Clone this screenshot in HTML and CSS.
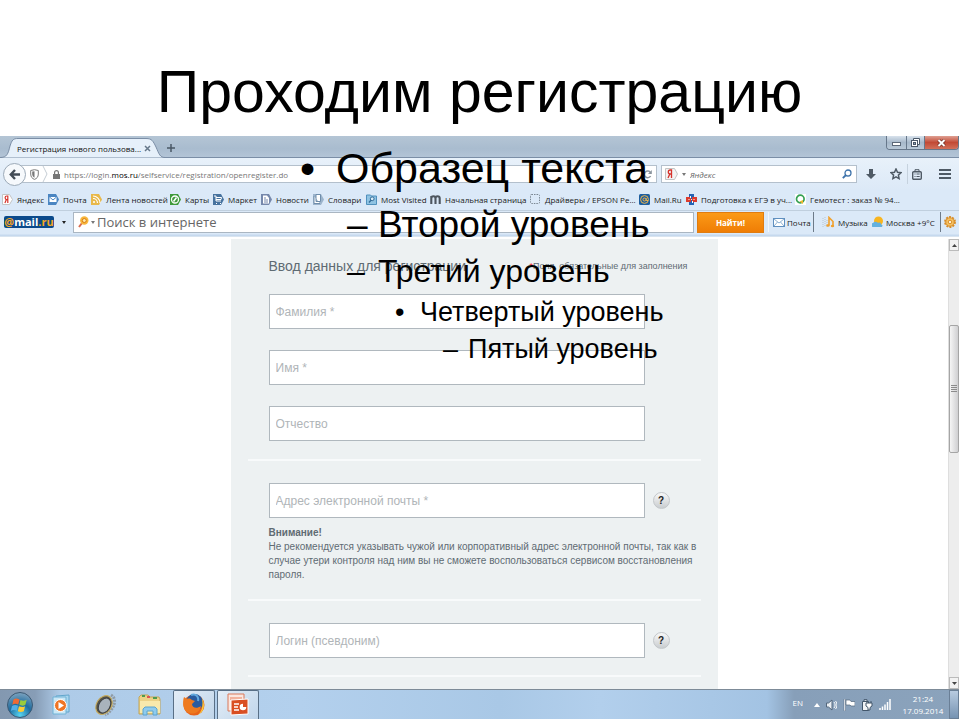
FILE: index.html
```
<!DOCTYPE html>
<html lang="ru">
<head>
<meta charset="utf-8">
<meta name="viewport" content="width=device-width, initial-scale=1">
<title>Проходим регистрацию</title>
<link rel="stylesheet" href="styles.css">
</head>
<body>
<main class="slide">
  <h1 class="title">Проходим регистрацию</h1>

  <section class="browser">
    <header class="tabstrip">
      <div class="tab">
        <svg class="tab-shape" viewBox="0 0 165 22" preserveAspectRatio="none" aria-hidden="true"><path d="M0 21.500C7 21.500 8 18 10 10C12 4 13 2.500 18 2.500H146C152 2.500 153 5 156 11C159 18 160 21.500 165 21.500" fill="#e6f0fa" stroke="#7b8ea6"/></svg>
        <span class="tab-name">Регистрация нового пользова...</span>
        <button class="plain tab-close" aria-label="Закрыть вкладку"><svg width="7" height="7" viewBox="0 0 7 7"><path d="M1 1l5 5M6 1l-5 5" stroke="#66788a" stroke-width="1.500"/></svg></button>
      </div>
      <button class="plain new-tab" aria-label="Новая вкладка"><svg width="8" height="8" viewBox="0 0 8 8"><path d="M4 0v8M0 4h8" stroke="#4a5866" stroke-width="1.500"/></svg></button>
      <div class="window-buttons">
        <button class="win" aria-label="Свернуть"><svg width="9" height="9" viewBox="0 0 9 9"><rect x=".5" y="4.500" width="8" height="3" fill="#fff" stroke="#5b6878"/></svg></button>
        <button class="win win-mid" aria-label="Развернуть"><svg width="9" height="9" viewBox="0 0 9 9"><path d="M2.500 2V.500h6v6H7" fill="#fff" stroke="#4b5868"/><rect x=".5" y="2.500" width="6" height="6" fill="#fff" stroke="#4b5868"/><rect x="2.500" y="4.500" width="2" height="2" fill="#8da0b5" stroke="#4b5868"/></svg></button>
        <button class="win win-close" aria-label="Закрыть"><svg width="9" height="8" viewBox="0 0 9 8"><path d="M1.500 1l6 6M7.500 1l-6 6" stroke="#6b2a22" stroke-width="3.400"/><path d="M1.500 1l6 6M7.500 1l-6 6" stroke="#fff" stroke-width="2"/></svg></button>
      </div>
    </header>

    <nav class="navbar">
      <button class="plain back" aria-label="Назад"><svg width="11" height="11" viewBox="0 0 11 11"><path d="M6 1L1.800 5.500 6 10M2 5.500h9" fill="none" stroke="#414b55" stroke-width="2.400"/></svg></button>
      <div class="urlbar">
        <svg width="9" height="11" viewBox="0 0 9 11" aria-hidden="true"><path d="M4.500.7L8.300 1.500V5c0 3-1.500 4.500-3.800 5.400C2.200 9.500.7 8 .7 5V1.500z" fill="#fff" stroke="#7b7b7b"/><path d="M4.500 2.200v6.600C3 8 2.200 6.800 2.200 5V2.600z" fill="#777"/></svg>
        <svg class="chevron" width="6" height="16" viewBox="0 0 6 16" aria-hidden="true"><path d="M1 0l4 8-4 8" fill="none" stroke="#c5cdd4"/></svg>
        <svg class="lock" width="7" height="9" viewBox="0 0 7 9" aria-hidden="true"><path d="M1.600 4V2.500a1.900 1.900 0 013.800 0V4" fill="none" stroke="#777" stroke-width="1.200"/><rect y="4" width="7" height="5" fill="#777"/></svg>
        <label class="url" for="url">https://login.<b>mos.ru</b>/selfservice/registration/openregister.do</label>
        <input id="url" class="url-input" type="text">
        <button class="plain reload" aria-label="Обновить"><svg width="9" height="9" viewBox="0 0 9 9"><path d="M7.500 2.600A3.300 3.300 0 107.600 6" fill="none" stroke="#8a949d" stroke-width="1.500"/><path d="M8.800 0v4H5z" fill="#8a949d"/></svg></button>
      </div>
      <div class="search">
        <svg width="13" height="12" viewBox="0 0 13 12" aria-hidden="true"><path d="M.5.500h9l3 5.500-3 5.500h-9z" fill="#f3f3f3" stroke="#c4c4c4"/><path d="M6.500 10V2H5.300a2 2 0 000 4h1M4.800 6L3 10" fill="none" stroke="#d6332c" stroke-width="1.300"/></svg>
        <i class="caret"></i>
        <input type="text" class="search-input" aria-label="Поиск" placeholder="Яндекс">
        <button class="plain" aria-label="Найти"><svg width="10" height="10" viewBox="0 0 10 10"><circle cx="6" cy="4" r="3" fill="none" stroke="#3e73ab" stroke-width="1.300"/><path d="M4 6L.8 9.200" stroke="#3e73ab" stroke-width="1.800"/></svg></button>
      </div>
      <div class="tools">
        <button class="plain" aria-label="Загрузки"><svg width="10" height="11" viewBox="0 0 10 11"><path d="M3 0h4v5h3L5 10 0 5h3z" fill="#4f5a65"/></svg></button>
        <button class="plain" aria-label="В закладки"><svg width="12" height="12" viewBox="0 0 12 12"><path d="M6 1l1.500 3.300 3.500.4-2.600 2.400.7 3.500L6 8.900l-3.100 1.700.7-3.500L1 4.700l3.500-.4z" fill="none" stroke="#4f5a65" stroke-width="1.500"/></svg></button>
        <button class="plain tool-list" aria-label="Закладки"><svg width="10" height="11" viewBox="0 0 10 11"><rect x=".7" y="2.700" width="8.600" height="7.600" rx="1" fill="none" stroke="#4f5a65" stroke-width="1.400"/><path d="M3 2.500V.7h4v1.800M2.500 5h1M4.500 5h3.200M2.500 7.500h1M4.500 7.500h3.200" fill="none" stroke="#4f5a65"/></svg></button>
        <button class="plain tool-menu" aria-label="Меню"><svg width="12" height="10" viewBox="0 0 12 10"><path d="M0 1h12M0 5h12M0 9h12" stroke="#4f5a65" stroke-width="2"/></svg></button>
      </div>
    </nav>

    <div class="bookmarks">
      <a href="#"><svg viewBox="0 0 11 11"><path d="M.5.500h7l3 5-3 5h-7z" fill="#fff" stroke="#c4c4c4"/><path d="M5.800 9V2H4.900a1.700 1.700 0 000 3.600h.8M4.400 5.600L2.900 9" fill="none" stroke="#d6332c" stroke-width="1.200"/></svg>Яндекс</a>
      <a href="#"><svg viewBox="0 0 11 11"><path d="M0 0h8l3 5.500L8 11H0z" fill="#4b86c2"/><rect x="1.500" y="3" width="7" height="5" fill="#fff"/><path d="M1.500 3L5 6l3.500-3" fill="none" stroke="#4b86c2"/></svg>Почта</a>
      <a href="#"><svg viewBox="0 0 11 11"><path d="M0 0h8l3 5.500L8 11H0z" fill="#e8b84a"/><path d="M2 4.500A4.500 4.500 0 016.500 9M2 2a7 7 0 017 7" fill="none" stroke="#fff" stroke-width="1.200"/><circle cx="3" cy="8" r="1" fill="#fff"/></svg>Лента новостей</a>
      <a href="#"><svg viewBox="0 0 11 11"><path d="M0 0h8l3 5.500L8 11H0z" fill="#3f9a3c"/><circle cx="5" cy="5.500" r="3.500" fill="none" stroke="#fff" stroke-width="1.300"/><path d="M3.500 7.500L6.500 3.500" stroke="#fff" stroke-width="1.500"/></svg>Карты</a>
      <a href="#"><svg viewBox="0 0 11 11"><path d="M0 0h8l3 5.500L8 11H0z" fill="#47739f"/><path d="M1 2h2v5h5M3 3.500h5.500L8 5.500H3" fill="none" stroke="#fff"/><path d="M3 9.500h1M7 9.500h1" stroke="#fff"/></svg>Маркет</a>
      <a href="#"><svg viewBox="0 0 11 11"><path d="M0 0h8l3 5.500L8 11H0z" fill="#7688ac"/><path d="M2 1.500h4L8 4v5.500H2z" fill="#fff"/><path d="M3 4h2M3 6h4M3 8h4" stroke="#7688ac"/></svg>Новости</a>
      <a href="#"><svg viewBox="0 0 11 11"><path d="M0 0h8l3 5.500L8 11H0z" fill="#9cb4cc"/><path d="M3 .500h4.500v7H3zM1 2v7.500h6" fill="#fff" stroke="#6e8dab"/></svg>Словари</a>
      <a href="#"><svg viewBox="0 0 11 11"><path d="M.5 1h4l1 1h5v8.500H.5z" fill="#8fc3e3" stroke="#4f90bd"/><circle cx="6.200" cy="4.800" r="1.900" fill="#d8edf8" stroke="#336b97"/><path d="M5 6.300L3 8.500" stroke="#336b97" stroke-width="1.300"/></svg>Most Visited</a>
      <a href="#"><svg viewBox="0 0 11 11"><path d="M1.300 10V2M1.300 4.500C1.300 1.500 5.500 1.500 5.500 4.500V10M5.500 4.500C5.500 1.500 9.700 1.500 9.700 4.500V10" fill="none" stroke="#4e565f" stroke-width="2.100"/></svg>Начальная страница</a>
      <a href="#"><svg viewBox="0 0 11 11"><rect x=".5" y=".5" width="9" height="9" rx="1" fill="none" stroke="#7b8792" stroke-dasharray="1.500 1"/></svg>Драйверы / EPSON Pe...</a>
      <a href="#"><svg viewBox="0 0 11 11"><rect width="11" height="11" rx="1.500" fill="#1d5e9f"/><circle cx="5.500" cy="5.500" r="3.900" fill="none" stroke="#efb54b"/><circle cx="5.500" cy="5.500" r="1.500" fill="none" stroke="#efb54b"/><path d="M7.200 4v2.500h2" fill="none" stroke="#efb54b"/></svg>Mail.Ru</a>
      <a href="#"><svg viewBox="0 0 11 11"><path d="M3 0h5v5H3zM3 6h5v5H3z" fill="#2463b4"/><path d="M0 3h5v5H0zM6 3h5v5H6z" fill="#dc3b2e"/><path d="M4.500 2v2M6.500 7v2M2.500 5.500h1M7.500 5.500h1" stroke="#fff"/></svg>Подготовка к ЕГЭ в уч...</a>
      <a href="#"><svg viewBox="0 0 11 11"><rect width="11" height="11" fill="#fff"/><circle cx="5.300" cy="5" r="3.800" fill="none" stroke="#36a153" stroke-width="1.700"/><path d="M4.500 7.500L8 6v4z" fill="#efb630"/></svg>Гемотест : заказ № 94...</a>
    </div>

    <div class="mailbar">
      <a href="#" class="mail-logo"><span>@</span>mail<span>.ru</span></a>
      <i class="caret caret-dark"></i>
      <div class="mail-search">
        <svg width="11" height="12" viewBox="0 0 11 12" aria-hidden="true"><path d="M4 7L1 11" stroke="#d86a4e" stroke-width="2"/><circle cx="6.300" cy="4.500" r="4.200" fill="#f8b63a"/><circle cx="6.300" cy="4.500" r="2" fill="#fce9a8" stroke="#d97a12"/></svg>
        <i class="caret"></i>
        <input type="text" class="mail-input" aria-label="Поиск в интернете" placeholder="Поиск в интернете">
      </div>
      <button class="find">Найти!</button>
      <a href="#" class="widget w-mail"><svg width="12" height="9" viewBox="0 0 12 9"><rect x=".5" y=".5" width="11" height="8" fill="#fff" stroke="#5f8fbf"/><path d="M1 1l5 4 5-4M1 8l3.500-4M11 8L7.500 4" fill="none" stroke="#8db1d3"/></svg>Почта</a>
      <a href="#" class="widget w-music"><svg width="14" height="12" viewBox="0 0 14 12"><path d="M1 2v9M3 1v10M5 4v7" stroke="#b9c5cf" stroke-dasharray="1 1"/><path d="M7 9V1.500l4 4V10" fill="none" stroke="#f0a02c" stroke-width="1.600"/><ellipse cx="6" cy="9.500" rx="1.700" ry="1.300" fill="#f0a02c"/><ellipse cx="10.500" cy="10" rx="1.700" ry="1.300" fill="#f0a02c"/></svg>Музыка</a>
      <a href="#" class="widget w-weather"><svg width="12" height="12" viewBox="0 0 12 12"><circle cx="6.500" cy="5" r="4.500" fill="#f8b51f"/><path d="M1 11a2 2 0 010-4 3 3 0 015 0c2-1 3 0 3 1.500 2 0 2 2.500 0 2.500z" fill="#63b1df"/></svg>Москва +9°C</a>
      <button class="plain gear" aria-label="Настройки"><svg width="12" height="12" viewBox="0 0 12 12"><circle cx="6" cy="6" r="5" fill="none" stroke="#d88b25" stroke-width="1.800" stroke-dasharray="2 1.140"/><circle cx="6" cy="6" r="4.200" fill="#f7c566" stroke="#d88b25"/><circle cx="6" cy="6" r="1.800" fill="#fdf0d2" stroke="#d88b25"/></svg></button>
    </div>

    <div class="viewport">
      <form class="panel">
        <div class="form-head">
          <h2>Ввод данных для регистрации</h2>
          <p><span class="star">*</span>Поля, обязательные для заполнения</p>
        </div>
        <div class="group">
          <input class="field" type="text" aria-label="Фамилия" placeholder="Фамилия *">
          <input class="field" type="text" aria-label="Имя" placeholder="Имя *">
          <input class="field" type="text" aria-label="Отчество" placeholder="Отчество">
        </div>
        <div class="group">
          <div class="with-help">
            <input class="field" type="email" aria-label="Адрес электронной почты" placeholder="Адрес электронной почты *">
            <button type="button" class="help">?</button>
          </div>
          <p class="note"><b>Внимание!</b><br>Не рекомендуется указывать чужой или корпоративный адрес электронной почты, так как в случае утери контроля над ним вы не сможете воспользоваться сервисом восстановления пароля.</p>
        </div>
        <div class="group">
          <div class="with-help">
            <input class="field" type="text" aria-label="Логин" placeholder="Логин (псевдоним)">
            <button type="button" class="help">?</button>
          </div>
        </div>
      </form>
      <div class="scrollbar" aria-hidden="true">
        <span class="arrow"><svg width="5" height="3" viewBox="0 0 5 3"><path d="M0 3L2.500 0 5 3z" fill="#444"/></svg></span>
        <span class="before-thumb"></span>
        <span class="thumb"><svg width="6" height="7" viewBox="0 0 6 7"><path d="M0 .500h6M0 2.500h6M0 4.500h6M0 6.500h6" stroke="#8b8b8b"/></svg></span>
        <span class="after-thumb"></span>
        <span class="arrow"><svg width="5" height="3" viewBox="0 0 5 3"><path d="M0 0L2.500 3 5 0z" fill="#444"/></svg></span>
      </div>
    </div>
  </section>

  <footer class="taskbar">
    <button class="task start" aria-label="Пуск"><svg width="28" height="28" viewBox="0 0 28 28"><defs><radialGradient id="orb" cx=".5" cy=".9" r=".9"><stop offset="0" stop-color="#57d5f2"/><stop offset=".5" stop-color="#1e6c9f"/><stop offset="1" stop-color="#7fa4bf"/></radialGradient></defs><circle cx="14" cy="14" r="12.500" fill="url(#orb)" stroke="#3b5873"/><path d="M7.500 8.500c2-1.500 3.800-1.300 6 0l-1.200 5c-2.200-1-4-1-6 .2z" fill="#ee6a34"/><path d="M14.500 9c2 1 4 1 6.200-.2l-1.300 5c-2 1.200-4 1-6.100 0z" fill="#9acb3c"/><path d="M6 15c2-1.300 4-1.200 6-.2l-1.200 5c-2-1-4-1-6 .2z" fill="#52aee6"/><path d="M13 15.200c2 1 4 1.200 6.100 0l-1.300 5c-2 1.100-4 1-6 0z" fill="#fbcb36"/></svg></button>
    <button class="task" aria-label="Проигрыватель"><svg width="20" height="22" viewBox="0 0 20 22"><path d="M4 2l13-1v17H4z" fill="#a8d6ef" stroke="#62a6cc"/><path d="M1 3h13v17H1z" fill="#c9e7f6" stroke="#70b2d5"/><circle cx="8.500" cy="11.500" r="6" fill="#ee7524" stroke="#fff"/><path d="M6.500 8l5.500 3.500L6.500 15z" fill="#fff"/></svg></button>
    <button class="task" aria-label="Звук"><svg width="24" height="24" viewBox="0 0 24 24"><path d="M17 2c7 4 3 15-6 20" fill="none" stroke="#8f9ba6" stroke-width="3" stroke-dasharray="2 1"/><ellipse cx="10" cy="12" rx="7.500" ry="10" transform="rotate(32 10 12)" fill="#55534a" stroke="#c7ad60" stroke-width="1.200"/><ellipse cx="10.500" cy="12.500" rx="5.500" ry="8" transform="rotate(32 10.500 12.500)" fill="#a9b3bc" stroke="#3d4043"/></svg></button>
    <button class="task" aria-label="Проводник"><svg width="24" height="24" viewBox="0 0 24 24"><path d="M1 4l2-2h7l2 2h9l1 2v15H1z" fill="#ecd287" stroke="#c2a557"/><path d="M4 3h3M15 5h4" stroke="#4e9b50" stroke-width="2"/><path d="M9 4h3" stroke="#d55" stroke-width="2"/><path d="M2 8h20v12H2z" fill="#f8e9ac"/><path d="M5 22v-6l2-2h10l2 2v6h-4v-4H9v4z" fill="#8fcbed" stroke="#5ba4d0"/></svg></button>
    <button class="task open" aria-label="Firefox"><svg width="24" height="24" viewBox="0 0 24 24"><circle cx="12" cy="12" r="10.500" fill="#e8641b"/><circle cx="12.500" cy="9.500" r="8.500" fill="#2a5b9f"/><path d="M9 2c5-2 8 2 7 6" fill="none" stroke="#62a9de" stroke-width="2"/><path d="M20 5c3 6 3 13-4 17 5-5 5-10 4-17z" fill="#fbcf3c"/><path d="M2 4l3 2c2-1 4 0 5 1l3 1-3 3c0 4 5 5 9 2-1 6-7 9-12 7C1 18 0 10 2 4z" fill="#ee7a20"/></svg></button>
    <button class="task open" aria-label="PowerPoint"><svg width="24" height="24" viewBox="0 0 24 24"><path d="M2 1h16v17H2z" fill="#fbe6df" stroke="#d9795b"/><path d="M4 4h12v3H4z" fill="#f2b29d"/><path d="M5 7l17-1v15l-17 1z" fill="#d94f23" stroke="#fff"/><path d="M8 11h5M8 14h4M8 17h5" stroke="#fff" stroke-width="1.600"/><circle cx="17" cy="14" r="3.300" fill="#fff"/><path d="M17 14V10h4v4z" fill="#d94f23"/></svg></button>
    <div class="tray">
      <span class="lang">EN</span>
      <svg width="6" height="4" viewBox="0 0 6 4"><path d="M0 4l3-4 3 4z" fill="#fff"/></svg>
      <svg width="11" height="12" viewBox="0 0 11 12"><path d="M.5 4v4h2L6 11V1L2.500 4z" fill="#e9eef3" stroke="#53677c"/><path d="M8 3c1.500 2 1.500 4 0 6M9.500 2c2 2.500 2 5.500 0 8" fill="none" stroke="#fff"/></svg>
      <svg width="12" height="12" viewBox="0 0 12 12"><path d="M1 0h1.500v12H1z" fill="#fff" stroke="#53677c" stroke-width=".5"/><path d="M3 1h4l1 1.500h4V7H8L7 6H3z" fill="#fff" stroke="#53677c" stroke-width=".7"/></svg>
      <svg width="12" height="12" viewBox="0 0 12 12"><path d="M1.500 2.500h6v9h-6zM3 2.500V.7h3v1.800" fill="#f0f3f6" stroke="#42566b"/><path d="M6 2v2M10 2v2M5 4h6v3L9 8.500V11H7V8.500L5 7z" fill="#fff" stroke="#42566b"/></svg>
      <svg width="12" height="11" viewBox="0 0 12 11"><path d="M1 11V9M3.500 11V7.500M6 11V5.500M8.500 11V3M11 11V0" stroke="#fff" stroke-width="1.500"/></svg>
      <time class="clock">21:24<br>17.09.2014</time>
    </div>
    <button class="desktop" aria-label="Показать рабочий стол"></button>
  </footer>

  <div class="outline">
    <p class="l1"><span class="bullet">•</span>Образец текста</p>
    <p class="l2"><span class="bullet">–</span>Второй уровень</p>
    <p class="l3"><span class="bullet">–</span>Третий уровень</p>
    <p class="l4"><span class="bullet">•</span>Четвертый уровень</p>
    <p class="l5"><span class="bullet">–</span>Пятый уровень</p>
  </div>
</main>
</body>
</html>
```
FILE: styles.css
```
* { box-sizing: border-box; }
body { margin: 0; background: #fff; font-family: "Liberation Sans", Arial, sans-serif; color: #000; }
h1, h2, p { margin: 0; font-weight: 400; }
a { color: inherit; text-decoration: none; }
svg { display: block; flex: none; }
input, button { font-family: inherit; }
input { min-width: 0; border: 0; padding: 0; background: none; outline: 0; }
.plain { display: flex; align-items: center; justify-content: center; padding: 0; border: 0; background: none; }

.slide { position: relative; display: flex; flex-direction: column; min-height: 100vh; padding: 0 1px 1px 0; }
.title { height: 136px; padding-top: 58px; font-size: 59px; line-height: 68px; text-align: center; }

.browser { flex: 1; display: flex; flex-direction: column; font-family: "Open Sans", "Noto Sans", sans-serif; font-size: 8px; color: #1a1a1a; }
.caret { flex: none; border: 2px solid transparent; border-top: 3px solid #777; border-bottom: 0; }
.caret-dark { border-top-color: #222; }

.tabstrip { display: flex; height: 22px; background: linear-gradient(#b4c5d5, #a9bccf 60%, #b3c4d6); border-bottom: 1px solid #7b8ea6; }
.tab { position: relative; display: flex; align-items: center; justify-content: space-between; width: 165px; height: 22px; padding: 3px 14px 0 17px; }
.tab-shape { position: absolute; inset: 0; width: 100%; height: 100%; }
.tab-name, .tab-close { position: relative; }
.tab-name { color: #111; white-space: nowrap; }
.new-tab { width: 12px; padding-top: 2px; }
.window-buttons { display: flex; width: 73px; height: 14px; margin-left: auto; border: 1px solid #66778a; border-top: 0; border-radius: 0 0 4px 4px; overflow: hidden; }
.win { display: flex; align-items: center; justify-content: center; width: 19px; padding: 0; border: 0; background: linear-gradient(#d8e2ec, #a6b8ca 50%, #b9c9d8); }
.win-mid { border-left: 1px solid #66778a; border-right: 1px solid #66778a; }
.win-close { flex: 1; background: linear-gradient(#dfa093, #c24a35 50%, #d2705a); }

.navbar { display: flex; align-items: center; height: 32px; padding: 0 8px 0 3px; background: linear-gradient(#e8f1fa, #dce9f7); }
.back { z-index: 1; width: 23px; height: 23px; border: 1px solid #9caab8; border-radius: 50%; background: #f6f9fc; }
.urlbar { position: relative; flex: 1; display: flex; align-items: center; height: 18px; margin-left: -6px; padding: 0 4px 0 9px; border: 1px solid #b4c0cc; background: #fff; }
.chevron { margin-left: 3px; }
.lock { margin: 0 4px 0 5px; }
.url { color: #777; white-space: nowrap; }
.url b { color: #000; font-weight: 400; }
.url-input { flex: 1; height: 16px; }
.search { display: flex; align-items: center; gap: 4px; width: 196px; height: 18px; margin-left: 4px; padding: 0 4px 0 3px; border: 1px solid #b4c0cc; background: #fff; }
.search-input { flex: 1; font-size: 8px; font-style: italic; }
.search-input::placeholder { color: #666; opacity: 1; }
.tools { display: flex; align-items: center; width: 94px; padding-left: 9px; }
.tools button { height: 20px; }
.tools button + button { margin-left: 14px; }
.tools .tool-list { margin-left: 5px; padding-left: 4px; border-left: 1px solid #c6d2de; }
.tools .tool-menu { margin-left: 17px; }

.bookmarks { display: grid; grid-template-columns: 46px 43px 79px 43px 48px 52px 53px 64px 100px 109px 47px 109px 1fr; align-items: center; height: 21px; padding: 0 0 2px 2px; background: #dbe9f8; border-bottom: 1px solid #c0cfde; }
.bookmarks a { display: flex; align-items: center; gap: 4px; white-space: nowrap; }
.bookmarks svg { width: 11px; height: 11px; }

.mailbar { display: flex; align-items: center; height: 26px; padding: 0 2px 3px 4px; background: linear-gradient(#dbe9f8 23px, #c6d9ee 24px); border-bottom: 1px solid #d8e4f0; }
.mail-logo { width: 50px; height: 12px; margin-right: 8px; border-radius: 2px; background: #0b4a8b; color: #fff; font: bold 11px/11px "Open Sans", sans-serif; text-align: center; white-space: nowrap; }
.mail-logo span { color: #f6a623; }
.mail-search { flex: 1; display: flex; align-items: center; gap: 2px; height: 21px; margin-left: 7px; padding-left: 4px; border: 1px solid #aab6c2; background: #fff; }
.mail-input { flex: 1; font-size: 13px; color: #555; }
.mail-input::placeholder { color: #666; opacity: 1; }
.find { width: 67px; height: 21px; margin-left: 3px; padding: 0; border: 1px solid #e07c10; background: linear-gradient(#fb9a17, #ef7d05); color: #fff; font-size: 8px; font-weight: 700; }
.widget { display: flex; align-items: center; gap: 2px; height: 20px; white-space: nowrap; }
.w-mail { width: 46px; margin-left: 4px; padding-left: 4px; border-left: 1px solid #f2f7fc; }
.w-mail, .w-weather { border-right: 1px solid #6d7a88; }
.w-music { width: 58px; padding-left: 8px; }
.w-weather { width: 69px; }
.gear { width: 16px; padding-left: 2px; }

.viewport { flex: 1; display: flex; padding-top: 2px; background: #fff; }
.panel { width: 487px; margin: 0 auto; padding: 0 17px; background: #edf1f2; font-family: "Liberation Sans", Arial, sans-serif; color: #5f6b73; }
.form-head { display: flex; justify-content: space-between; align-items: center; height: 55px; padding: 0 13px 2px 21px; }
.form-head h2 { font-size: 14px; }
.form-head p { font-size: 9px; }
.star { color: #e22; }
.group { display: flex; flex-direction: column; gap: 21px; padding: 0 0 18px 21px; border-bottom: 2px solid #f8fafb; }
.group + .group { padding-top: 22px; padding-bottom: 17px; gap: 8px; }
.field { width: 376px; height: 35px; padding: 0 6px; border: 1px solid #b0b8be; background: #fff; font-size: 12px; }
.field::placeholder { color: #b0b5b8; opacity: 1; }
.with-help { display: flex; align-items: center; gap: 8px; }
.help { width: 17px; height: 17px; padding: 0; border: 1px solid #c3c7ca; border-radius: 50%; background: linear-gradient(#f8f8f8, #c9cdd0); color: #222; font-size: 10px; font-weight: 700; line-height: 15px; }
.note { font-size: 10px; line-height: 14px; }

.scrollbar { display: flex; flex-direction: column; width: 11px; background: #ededed; border-left: 1px solid #dedede; }
.arrow { display: flex; align-items: center; justify-content: center; height: 12px; border: 1px solid #bbb; background: #f2f2f2; }
.before-thumb { flex: 74; }
.thumb { flex: 127; display: flex; align-items: center; justify-content: center; border: 1px solid #a5a5a5; border-radius: 2px; background: linear-gradient(90deg, #f5f5f5, #cfcfd1); }
.after-thumb { flex: 225; }

.taskbar { display: flex; height: 30px; border-top: 1px solid #7d8b98; background: linear-gradient(90deg, #8398b0, #879db6 35px, #aecbe8 60px, #b3d0ed 300px, #a9c8e6 500px, #b2cfec 600px, #a3c3e3 calc(100% - 192px), #879fb9 calc(100% - 165px), #8ba3bc); }
.task { display: flex; align-items: center; justify-content: center; width: 44px; padding: 0; border: 1px solid transparent; border-bottom: 0; background: none; overflow: hidden; }
.start { width: 40px; }
.open { width: 42px; margin: 0 1px; border-color: #596f86; border-radius: 2px 2px 0 0; background: linear-gradient(135deg, #e3edf7, #c0d5ea); }
.tray { display: flex; align-items: center; gap: 6px; margin-left: auto; color: #fff; font-family: "Open Sans", sans-serif; }
.lang { margin: 0 5px 4px 0; font-size: 8px; }
.clock { width: 44px; margin-left: 4px; font-size: 8px; line-height: 12px; text-align: center; }
.desktop { width: 10px; margin-left: 4px; padding: 0; border: 1px solid #6a7f96; background: linear-gradient(#b8cbe0, #7693b2); }

.outline { position: absolute; top: 144px; left: 300px; pointer-events: none; white-space: nowrap; }
.outline p { display: flex; }
.bullet { flex: none; }
.l1 { font-size: 43px; line-height: 48px; }
.l1 .bullet { width: 36px; }
.l2 { padding: 12px 0 0 47px; font-size: 37px; line-height: 42px; }
.l2 .bullet { width: 31px; }
.l3 { padding: 7px 0 0 47px; font-size: 32px; line-height: 36px; }
.l3 .bullet { width: 31px; }
.l4 { padding: 7px 0 0 95px; font-size: 27px; line-height: 32px; }
.l4 .bullet, .l5 .bullet { width: 25px; }
.l5 { padding: 5px 0 0 143px; font-size: 27px; line-height: 32px; }
```
